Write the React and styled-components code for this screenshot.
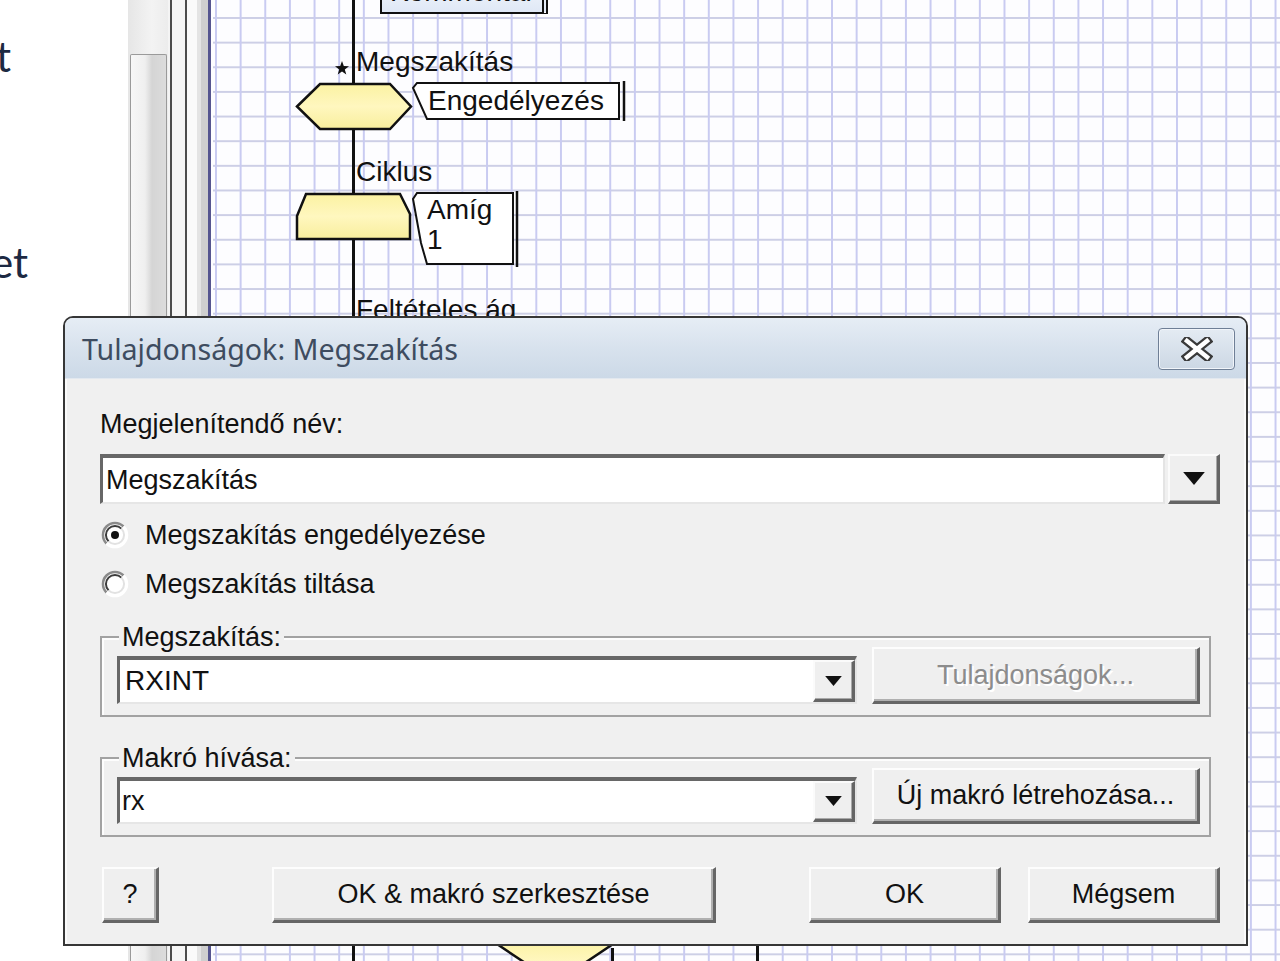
import React from "react";
import styled, { createGlobalStyle } from "styled-components";

const GlobalStyle = createGlobalStyle`
  html, body {
    margin: 0;
    padding: 0;
    background: #fff;
  }
  body {
    width: 1280px;
    height: 961px;
    overflow: hidden;
    font-family: "Liberation Sans", Arial, sans-serif;
  }
`;

const Screen = styled.div`
  position: relative;
  width: 1280px;
  height: 961px;
  display: flex;
  overflow: hidden;
  background: #fff;
`;

/* ---------- left side: cut-off panel, scrollbar, splitter ---------- */

const SidePanel = styled.div`
  width: 128px;
  flex: none;
  display: flex;
  flex-direction: column;
  overflow: hidden;
  background: #fff;
  font-family: Lato, "Open Sans", sans-serif;
  font-size: 42px;
  line-height: 42px;
  color: #1d2942;
`;

const SideWord = styled.span`
  margin-top: ${(p) => p.$top}px;
  margin-left: ${(p) => p.$shift}px;
  white-space: nowrap;
`;

const ScrollTrack = styled.div`
  width: 40px;
  flex: none;
  box-sizing: border-box;
  display: flex;
  padding: 54px 1px 0 2px;
  background: linear-gradient(to right, #e6e6e6, #f3f3f3 60%, #ececec);
`;

const ScrollThumb = styled.div`
  flex: 1;
  border: 1px solid #9a9a9a;
  border-bottom: none;
  border-radius: 2px 2px 0 0;
  background: linear-gradient(
    to right,
    #f7f7f7 0%,
    #efefef 40%,
    #d5d5d5 60%,
    #dcdcdc 100%
  );
`;

const Splitter = styled.div`
  width: 45px;
  flex: none;
  background: linear-gradient(
    to right,
    #f4f4f4 0 2px,
    #4c4c4c 2px 4px,
    #f5f5f5 4px 17px,
    #4c4c4c 17px 19px,
    #fafafa 19px 29px,
    #e4e4e4 29px 33px,
    #cfcfcf 33px 40px,
    #55558f 40px 43px,
    #fdfdff 43px
  );
`;

/* ---------- flowchart canvas ---------- */

const Canvas = styled.div`
  position: relative;
  flex: 1;
  background-color: #fdfdff;
  background-image: linear-gradient(to right, #c9cbf1 0, #c9cbf1 2px, transparent 2px),
    linear-gradient(to bottom, #cdcfe6 0, #cdcfe6 2px, transparent 2px);
  background-size: 24.65px 24.65px;
  background-position: 2px 17px;
`;

const FlowLine = styled.div`
  position: absolute;
  left: ${(p) => p.$x}px;
  top: ${(p) => p.$y}px;
  width: 3px;
  height: ${(p) => p.$h}px;
  background: #111;
`;

const NodeLabel = styled.div`
  position: absolute;
  left: ${(p) => p.$x}px;
  top: ${(p) => p.$y}px;
  font-family: "Liberation Sans", Arial, sans-serif;
  font-size: 28px;
  line-height: 28px;
  color: #111;
  white-space: nowrap;
`;

const Shape = styled.svg`
  position: absolute;
  left: ${(p) => p.$x}px;
  top: ${(p) => p.$y}px;
  overflow: visible;
`;

const Comment = styled.div`
  position: absolute;
  left: 167px;
  top: -22px;
  width: 168px;
  height: 36px;
  box-sizing: border-box;
  border: 2px solid #111;
  border-right: 6px double #111;
  background: linear-gradient(#f3f6fc, #dfe8f6);
  padding: 0 0 0 8px;
  font-size: 28px;
  line-height: 24px;
  color: #111;
  overflow: hidden;
  white-space: nowrap;
`;

const Tag = styled.div`
  position: absolute;
  left: ${(p) => p.$x}px;
  top: ${(p) => p.$y}px;
  width: ${(p) => p.$w}px;
  height: ${(p) => p.$h}px;
`;

const TagOutline = styled.svg`
  position: absolute;
  inset: 0;
  overflow: visible;
`;

const TagText = styled.div`
  position: relative;
  padding: ${(p) => p.$pad};
  font-size: 28px;
  line-height: 30px;
  color: #111;
  white-space: pre;
`;

const shapeFill = "url(#yellowFill)";

const FlowChart = () => (
  <>
    <FlowLine $x={139} $y={0} $h={961} />
    <FlowLine $x={543} $y={700} $h={261} />
    <FlowLine $x={398} $y={948} $h={13} />

    <Comment>Kommentár</Comment>

    <Shape $x={122} $y={61} width="14" height="14" viewBox="0 0 14 14">
      <polygon
        points="7,0 8.8,5 14,5.2 9.8,8.4 11.3,13.6 7,10.5 2.7,13.6 4.2,8.4 0,5.2 5.2,5"
        fill="#111"
      />
    </Shape>
    <NodeLabel $x={143} $y={48}>Megszakítás</NodeLabel>

    <Shape $x={83} $y={83} width="116" height="47" viewBox="0 0 116 47">
      <defs>
        <linearGradient id="yellowFill" x1="0" y1="0" x2="0" y2="1">
          <stop offset="0" stopColor="#fbf2a2" />
          <stop offset="0.5" stopColor="#fff7bf" />
          <stop offset="1" stopColor="#f8ee9c" />
        </linearGradient>
      </defs>
      <polygon
        points="1,23.5 24,1 94,1 115,23.5 94,46 24,46"
        fill={shapeFill}
        stroke="#111"
        strokeWidth="2.5"
      />
    </Shape>

    <Tag $x={199} $y={81} $w={216} $h={40}>
      <TagOutline width="216" height="40" viewBox="0 0 216 40">
        <path d="M5 2 L207 2 L207 38 L15 38 L1 7 Z" fill="#fff" stroke="#111" strokeWidth="2" />
        <line x1="212" y1="0" x2="212" y2="40" stroke="#111" strokeWidth="2.5" />
      </TagOutline>
      <TagText $pad="5px 0 0 16px">Engedélyezés</TagText>
    </Tag>

    <NodeLabel $x={143} $y={158}>Ciklus</NodeLabel>

    <Shape $x={83} $y={193} width="116" height="47" viewBox="0 0 116 47">
      <polygon
        points="10,1 104,1 114,21 114,46 1,46 1,23"
        fill={shapeFill}
        stroke="#111"
        strokeWidth="2.5"
      />
    </Shape>

    <Tag $x={199} $y={191} $w={108} $h={76}>
      <TagOutline width="108" height="76" viewBox="0 0 108 76">
        <path d="M5 2 L101 2 L101 73 L15 73 L9 52 L1 8 Z" fill="#fff" stroke="#111" strokeWidth="2" />
        <line x1="105" y1="0" x2="105" y2="76" stroke="#111" strokeWidth="2.5" />
      </TagOutline>
      <TagText $pad="4px 0 0 15px">{"Amíg\n1"}</TagText>
    </Tag>

    <NodeLabel $x={143} $y={296}>Feltételes ág</NodeLabel>

    <Shape $x={288} $y={930} width="120" height="40" viewBox="0 0 120 40">
      <polygon points="-10,10 118,10 54,53" fill={shapeFill} stroke="#111" strokeWidth="2.5" />
    </Shape>
  </>
);

/* ---------- dialog window ---------- */

const Dialog = styled.div`
  position: absolute;
  left: 63px;
  top: 316px;
  width: 1185px;
  height: 630px;
  box-sizing: border-box;
  display: flex;
  flex-direction: column;
  border: 2px solid #363636;
  border-radius: 10px 10px 0 0;
  background: #f0f0f0;
  overflow: hidden;
  font-family: "Liberation Sans", Arial, sans-serif;
  color: #111;
`;

const TitleBar = styled.div`
  height: 60px;
  flex: none;
  display: flex;
  align-items: center;
  justify-content: space-between;
  padding: 0 11px 0 17px;
  background: linear-gradient(#e6edf5 0%, #d9e3ee 45%, #ccd9e7 100%);
  border-bottom: 1px solid #e2e8ef;
`;

const Title = styled.div`
  font-family: "Noto Sans", "Open Sans", sans-serif;
  font-size: 28.6px;
  color: #3e4c60;
`;

const CloseButton = styled.div`
  align-self: flex-start;
  margin-top: 10px;
  width: 77px;
  height: 42px;
  box-sizing: border-box;
  display: flex;
  align-items: center;
  justify-content: center;
  border: 1px solid #6f7f96;
  border-radius: 4px;
  background: linear-gradient(#e4ebf3, #ccd7e4);
  box-shadow: inset 0 0 0 1px #f1f5fa;
`;

const Body = styled.div`
  flex: 1;
  display: flex;
  flex-direction: column;
  padding: 30px 24px 0 33px;
  border-left: 2px solid #fafafa;
  border-right: 2px solid #fafafa;
`;

const FieldLabel = styled.div`
  font-size: 27px;
  line-height: 30px;
  height: 30px;
`;

const ComboRow = styled.div`
  display: flex;
  margin-top: ${(p) => p.$mt || 0}px;
  height: ${(p) => p.$h}px;
`;

const Sunken = styled.div`
  box-sizing: border-box;
  display: flex;
  flex: ${(p) => (p.$w ? "none" : 1)};
  width: ${(p) => (p.$w ? `${p.$w}px` : "auto")};
  height: ${(p) => p.$h}px;
  background: #fff;
  border-style: solid;
  border-width: 4px 2px 2px 3px;
  border-color: #676767 #e4e4e4 #e6e6e6 #676767;
`;

const ComboText = styled.div`
  flex: 1;
  display: flex;
  align-items: center;
  padding-left: ${(p) => p.$pl}px;
  font-size: ${(p) => p.$size || 27}px;
  white-space: nowrap;
`;

const DropButton = styled.div`
  box-sizing: border-box;
  flex: none;
  width: ${(p) => p.$w}px;
  margin-left: ${(p) => p.$ml || 0}px;
  display: flex;
  align-items: center;
  justify-content: center;
  background: #efefef;
  border-style: solid;
  border-width: 2px 3px 3px 2px;
  border-color: #fbfbfb #656565 #656565 #fbfbfb;
  box-shadow: inset -1px -1px 0 #a8a8a8;
`;

const RadioRow = styled.div`
  display: flex;
  align-items: center;
  height: 30px;
  margin-top: ${(p) => p.$mt}px;
  margin-left: 1px;
  gap: 16px;
  font-size: 27px;
`;

const Group = styled.fieldset`
  margin: ${(p) => p.$mt}px 9px 0 0;
  padding: 0 13px 11px 15px;
  min-width: 0;
  border: 2px solid #a2a2a2;
  box-shadow: inset 2px 2px 0 #fdfdfd;
`;

const Legend = styled.legend`
  margin-left: 2px;
  padding: 0 3px;
  height: 20px;
  font-size: 27px;
  line-height: 20px;
  background: #f0f0f0;
`;

const GroupRow = styled.div`
  display: flex;
  align-items: flex-end;
  gap: 15px;
`;

const Button = styled.div`
  box-sizing: border-box;
  flex: none;
  width: ${(p) => p.$w}px;
  height: ${(p) => p.$h || 56}px;
  margin-left: ${(p) => p.$ml || 0}px;
  display: flex;
  align-items: center;
  justify-content: center;
  background: #efefef;
  border-style: solid;
  border-width: 2px 3px 3px 2px;
  border-color: #fdfdfd #666 #666 #fdfdfd;
  box-shadow: inset -2px -2px 0 #b0b0b0;
  font-size: 27px;
  white-space: nowrap;
  color: ${(p) => (p.$disabled ? "#8c8c8c" : "#111")};
  text-shadow: ${(p) => (p.$disabled ? "2px 2px 0 #fff" : "none")};
`;

const ButtonRow = styled.div`
  display: flex;
  margin-top: 30px;
`;

const Triangle = ({ w, h }) => (
  <svg width={w} height={h} viewBox="0 0 20 12">
    <polygon points="0,0 20,0 10,12" fill="#111" />
  </svg>
);

const Radio = ({ checked }) => (
  <svg width="28" height="28" viewBox="0 0 28 28">
    <circle cx="14" cy="14" r="12" fill="#fff" />
    <path d="M5.5 22.5 A12 12 0 0 1 22.5 5.5" fill="none" stroke="#8a8a8a" strokeWidth="2.5" />
    <path d="M7.6 20.4 A9 9 0 0 1 20.4 7.6" fill="none" stroke="#3c3c3c" strokeWidth="2" />
    <path d="M22.5 5.5 A12 12 0 0 1 5.5 22.5" fill="none" stroke="#fff" strokeWidth="2.5" />
    <path d="M20.4 7.6 A9 9 0 0 1 7.6 20.4" fill="none" stroke="#e2e2e2" strokeWidth="2" />
    {checked && <circle cx="14" cy="14" r="4" fill="#111" />}
  </svg>
);

const CloseGlyph = () => (
  <svg width="32" height="24" viewBox="0 0 32 24">
    <path d="M6 4 L26 20 M26 4 L6 20" stroke="#3a3a3a" strokeWidth="9" strokeLinecap="square" />
    <path d="M6 4 L26 20 M26 4 L6 20" stroke="#fff" strokeWidth="4.5" strokeLinecap="square" />
  </svg>
);

const PropertiesDialog = () => (
  <Dialog>
    <TitleBar>
      <Title>Tulajdonságok: Megszakítás</Title>
      <CloseButton>
        <CloseGlyph />
      </CloseButton>
    </TitleBar>

    <Body>
      <FieldLabel>Megjelenítendő név:</FieldLabel>
      <ComboRow $mt={15} $h={50}>
        <Sunken $h={50}>
          <ComboText $pl={3}>Megszakítás</ComboText>
        </Sunken>
        <DropButton $w={52} $ml={3}>
          <Triangle w={22} h={13} />
        </DropButton>
      </ComboRow>

      <RadioRow $mt={16}>
        <Radio checked />
        Megszakítás engedélyezése
      </RadioRow>
      <RadioRow $mt={19}>
        <Radio />
        Megszakítás tiltása
      </RadioRow>

      <Group $mt={28}>
        <Legend>Megszakítás:</Legend>
        <GroupRow>
          <Sunken $w={740} $h={48}>
            <ComboText $pl={5} $size={28}>
              RXINT
            </ComboText>
            <DropButton $w={42}>
              <Triangle w={17} h={10} />
            </DropButton>
          </Sunken>
          <Button $w={328} $h={57} $disabled>
            Tulajdonságok...
          </Button>
        </GroupRow>
      </Group>

      <Group $mt={31}>
        <Legend>Makró hívása:</Legend>
        <GroupRow>
          <Sunken $w={740} $h={47}>
            <ComboText $pl={2}>rx</ComboText>
            <DropButton $w={42}>
              <Triangle w={17} h={10} />
            </DropButton>
          </Sunken>
          <Button $w={328} $h={56}>
            Új makró létrehozása...
          </Button>
        </GroupRow>
      </Group>

      <ButtonRow>
        <Button $w={57} $ml={2}>
          ?
        </Button>
        <Button $w={444} $ml={113}>
          OK &amp; makró szerkesztése
        </Button>
        <Button $w={192} $ml={93}>
          OK
        </Button>
        <Button $w={192} $ml={27}>
          Mégsem
        </Button>
      </ButtonRow>
    </Body>
  </Dialog>
);

export default function App() {
  return (
    <>
      <GlobalStyle />
      <Screen>
        <SidePanel>
          <SideWord $top={35} $shift={-4}>
            t
          </SideWord>
          <SideWord $top={164} $shift={-9}>
            et
          </SideWord>
        </SidePanel>
        <ScrollTrack>
          <ScrollThumb />
        </ScrollTrack>
        <Splitter />
        <Canvas>
          <FlowChart />
        </Canvas>
        <PropertiesDialog />
      </Screen>
    </>
  );
}
